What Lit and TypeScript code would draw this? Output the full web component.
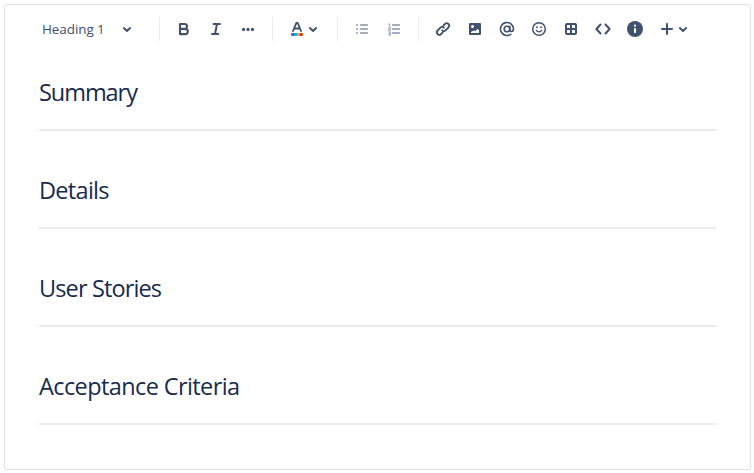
import { LitElement, html, css, svg } from "lit";
import { customElement, property } from "lit/decorators.js";
import { styleMap } from "lit/directives/style-map.js";

const icons: Record<string, unknown> = {
  chevron: svg`<path d="M8.9 11.1 12 14l3.1-2.9" fill="none" stroke="currentColor" stroke-width="2" stroke-linecap="round" stroke-linejoin="round"/>`,
  bold: svg`<path d="M8 7h4.6a2.4 2.4 0 0 1 0 4.9H8zM8 11.9h5.2a2.6 2.6 0 0 1 0 5.2H8z" fill="none" stroke="currentColor" stroke-width="2.1" stroke-linejoin="round"/>`,
  italic: svg`<path d="M9.6 7H16M8 17h6.2M13 7l-2 10" fill="none" stroke="currentColor" stroke-width="2" stroke-linecap="round"/>`,
  more: svg`<g fill="currentColor"><circle cx="7.5" cy="12.4" r="1.6"/><circle cx="12" cy="12.4" r="1.6"/><circle cx="16.5" cy="12.4" r="1.6"/></g>`,
  color: svg`<path d="M8 14 11.3 6h1.4L16 14M9.2 11.5h5.6" fill="none" stroke="currentColor" stroke-width="1.9" stroke-linecap="round" stroke-linejoin="round"/>
    <path d="M9 16H7.2A1.2 1.2 0 0 0 6 17.2v.6A1.2 1.2 0 0 0 7.2 19H9z" fill="#6554c0"/><path d="M9 16h3v3H9z" fill="#00b8d9"/><path d="M12 16h3v3h-3z" fill="#ff991f"/><path d="M15 16h1.8a1.2 1.2 0 0 1 1.2 1.2v.6a1.2 1.2 0 0 1-1.2 1.2H15z" fill="#de350b"/>`,
  bullets: svg`<g fill="currentColor"><rect x="6" y="7" width="2" height="2" rx=".5"/><rect x="6" y="11" width="2" height="2" rx=".5"/><rect x="6" y="15" width="2" height="2" rx=".5"/><rect x="10" y="7" width="8" height="2" rx=".5"/><rect x="10" y="11" width="8" height="2" rx=".5"/><rect x="10" y="15" width="8" height="2" rx=".5"/></g>`,
  numbers: svg`<g fill="currentColor"><rect x="10" y="7" width="8" height="2" rx=".5"/><rect x="10" y="11" width="8" height="2" rx=".5"/><rect x="10" y="15" width="8" height="2" rx=".5"/></g><path d="M6.2 7h1.3v2.8M6 10.9h2.4v1L6.5 13.3h2.2M6 15h2.5v2.9H6M7 16.4h1.5" fill="none" stroke="currentColor" stroke-width="1.1"/>`,
  link: svg`<path d="m12.3 8.6 1.6-1.6a2.45 2.45 0 0 1 3.5 3.5l-2.8 2.8a2.45 2.45 0 0 1-3.5 0M11.7 15.4l-1.6 1.6a2.45 2.45 0 0 1-3.5-3.5l2.8-2.8a2.45 2.45 0 0 1 3.5 0" fill="none" stroke="currentColor" stroke-width="1.8" stroke-linecap="round"/>`,
  image: svg`<path fill="currentColor" fill-rule="evenodd" d="M7 6h10a1 1 0 0 1 1 1v10a1 1 0 0 1-1 1H7a1 1 0 0 1-1-1V7a1 1 0 0 1 1-1zm2.5 2a1.5 1.5 0 1 0 0 3 1.5 1.5 0 0 0 0-3zM8 16h8v-2.7l-1.4-1.2-2.4 2.2-1.3-.9L8 15z"/>`,
  mention: svg`<g fill="none" stroke="currentColor" stroke-width="1.6" stroke-linecap="round"><circle cx="12" cy="12" r="2.8"/><path d="M14.8 9.2v3.5c0 2.7 3.7 2.4 3.7-1A6.5 6.5 0 1 0 15.7 17.3"/></g>`,
  emoji: svg`<circle cx="12" cy="12" r="6.3" fill="none" stroke="currentColor" stroke-width="1.5"/><circle cx="10" cy="10.3" r=".95" fill="currentColor"/><circle cx="14" cy="10.3" r=".95" fill="currentColor"/><path d="M9.3 13.3c1 2 4.4 2 5.4 0" fill="none" stroke="currentColor" stroke-width="1.3" stroke-linecap="round"/>`,
  table: svg`<path fill="currentColor" fill-rule="evenodd" d="M8 6h8a2 2 0 0 1 2 2v8a2 2 0 0 1-2 2H8a2 2 0 0 1-2-2V8a2 2 0 0 1 2-2zm0 2v3h3V8zm5 0v3h3V8zm-5 5v3h3v-3zm5 0v3h3v-3z"/>`,
  code: svg`<path d="M9.5 7.5 5.4 12l4.1 4.5M14.5 7.5l4.1 4.5-4.1 4.5" fill="none" stroke="currentColor" stroke-width="2" stroke-linecap="round" stroke-linejoin="round"/>`,
  info: svg`<circle cx="12" cy="12" r="8" fill="currentColor"/><circle cx="12" cy="8.7" r="1.1" fill="#fff"/><rect x="11" y="11" width="2" height="5" rx=".7" fill="#fff"/>`,
  plus: svg`<path d="M12 7v10M7 12h10" fill="none" stroke="currentColor" stroke-width="2" stroke-linecap="round"/>`,
};

@customElement("tool-icon")
class ToolIcon extends LitElement {
  @property() name = "";
  static styles = css`
    :host { display: block; flex: none; width: 24px; height: 24px; }
    svg { display: block; width: 24px; height: 24px; }
  `;
  render() {
    return html`<svg viewBox="0 0 24 24">${icons[this.name]}</svg>`;
  }
}

@customElement("app-root")
class AppRoot extends LitElement {
  static styles = css`
    :host {
      display: block;
      box-sizing: border-box;
      height: 473px;
      padding: 4px 3px 3px 4px;
      background: #fff;
      font-family: "Open Sans", "Noto Sans", sans-serif;
    }
    .editor {
      box-sizing: border-box;
      height: 466px;
      border: 1px solid #dfe1e6;
      border-radius: 3px;
    }
    .toolbar {
      display: flex;
      align-items: center;
      height: 48px;
      color: #42526e;
    }
    .style {
      display: flex;
      align-items: center;
      width: 97px;
      margin: 0 20px 0 37px;
    }
    .style span {
      width: 73px;
      font-size: 13.5px;
      line-height: 20px;
      letter-spacing: -0.1px;
      white-space: nowrap;
    }
    .group { display: flex; padding: 0 8px; }
    .group tool-icon { margin: 0 4px; }
    .group.muted { color: #a5adba; }
    .menu { display: flex; }
    .group .menu tool-icon { margin: 0; }
    .group .menu tool-icon + tool-icon { margin-left: -8px; }
    .insert { margin-left: 4px; }
    .colors { padding: 0 12px; }
    .separator { width: 1px; height: 24px; background: #ebecf0; }
    .content { padding: 19px 34px 0; }
    section { height: 77px; margin-bottom: 21px; }
    h1 {
      height: 57px;
      margin: 0;
      color: #172b4d;
      font-size: 23.5px;
      font-weight: 400;
      line-height: 40px;
    }
    hr { height: 2px; margin: 0; border: 0; background: #ebecf0; }
  `;
  private inserts = ["link", "image", "mention", "emoji", "table", "code", "info"];
  private headings = [
    { text: "Summary", tracking: -1.05 },
    { text: "Details", tracking: -0.7 },
    { text: "User Stories", tracking: -0.87 },
    { text: "Acceptance Criteria", tracking: -0.6 },
  ];
  render() {
    return html`
      <div class="editor">
        <div class="toolbar">
          <div class="style"><span>Heading 1</span><tool-icon name="chevron"></tool-icon></div>
          <div class="separator"></div>
          <div class="group">
            ${["bold", "italic", "more"].map((n) => html`<tool-icon name=${n}></tool-icon>`)}
          </div>
          <div class="separator"></div>
          <div class="group colors">
            <div class="menu"><tool-icon name="color"></tool-icon><tool-icon name="chevron"></tool-icon></div>
          </div>
          <div class="separator"></div>
          <div class="group muted">
            <tool-icon name="bullets"></tool-icon><tool-icon name="numbers"></tool-icon>
          </div>
          <div class="separator"></div>
          <div class="group">
            ${this.inserts.map((n) => html`<tool-icon name=${n}></tool-icon>`)}
            <div class="menu insert"><tool-icon name="plus"></tool-icon><tool-icon name="chevron"></tool-icon></div>
          </div>
        </div>
        <div class="content">
          ${this.headings.map(
            (h) => html`<section>
              <h1 style=${styleMap({ letterSpacing: `${h.tracking}px` })}>${h.text}</h1>
              <hr />
            </section>`
          )}
        </div>
      </div>
    `;
  }
}
